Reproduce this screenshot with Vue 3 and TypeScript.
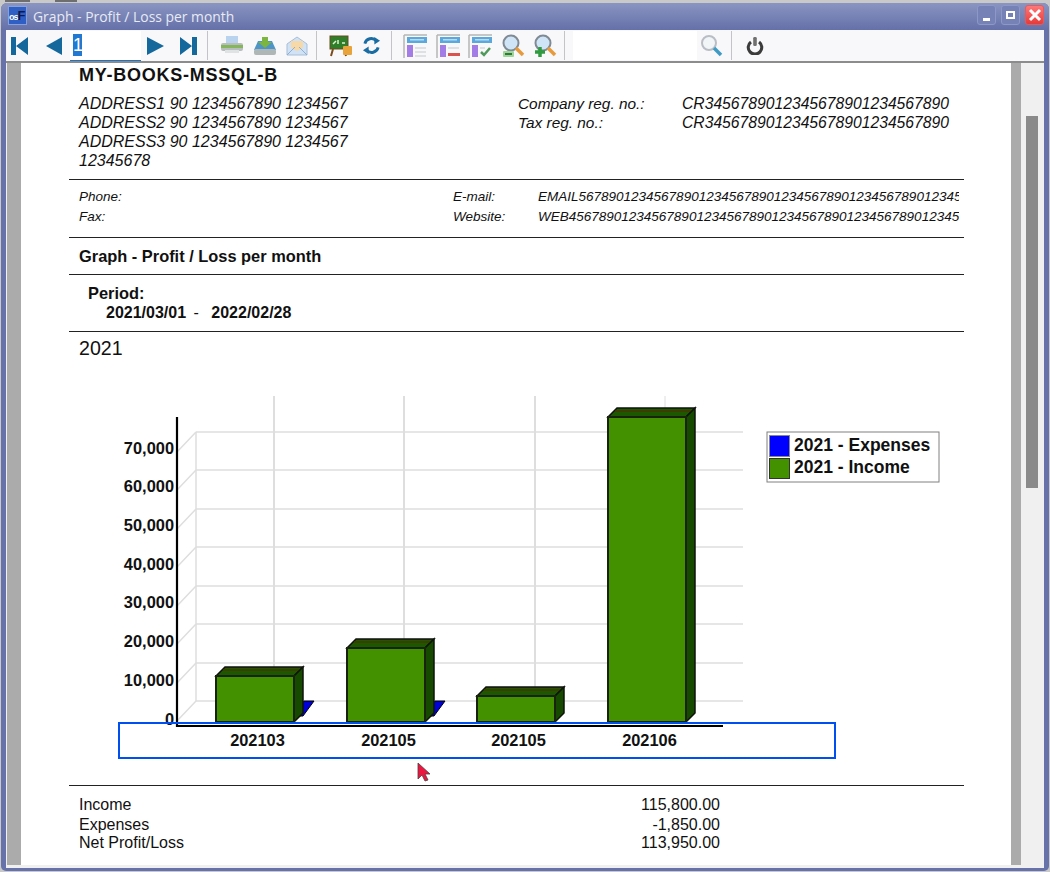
<script setup lang="ts">
const companyLines = [
  'ADDRESS1 90 1234567890 1234567',
  'ADDRESS2 90 1234567890 1234567',
  'ADDRESS3 90 1234567890 1234567',
  '12345678',
];

// grid lines sit slightly tighter than the labels next to them
const ticks = [
  { label: '70,000', y: 432, labelY: 454 },
  { label: '60,000', y: 470, labelY: 492 },
  { label: '50,000', y: 509, labelY: 531 },
  { label: '40,000', y: 547, labelY: 570 },
  { label: '30,000', y: 586, labelY: 608 },
  { label: '20,000', y: 624, labelY: 647 },
  { label: '10,000', y: 663, labelY: 686 },
  { label: '0', y: 701, labelY: 725 },
];

const bars = [
  { label: '202103', x: 216, top: 676, expense: true },
  { label: '202105', x: 347, top: 648, expense: true },
  { label: '202105', x: 477, top: 696, expense: false },
  { label: '202106', x: 608, top: 417, expense: false },
];

const BAR_W = 78;
const DEPTH = 9;
const BASE = 722;

const totals = [
  { name: 'Income', value: '115,800.00', cls: 'gap-a' },
  { name: 'Expenses', value: '-1,850.00', cls: '' },
  { name: 'Net Profit/Loss', value: '113,950.00', cls: '' },
];
</script>

<template>
  <div class="desktop">
    <div class="behind"><i class="mark-a" /><i class="mark-b" /></div>
    <div class="window">
      <header class="titlebar">
        <div class="app-icon"><span>os</span><b>F</b></div>
        <span class="title">Graph - Profit / Loss per month</span>
        <div class="win-buttons">
          <button class="win-btn"><i class="min-glyph" /></button>
          <button class="win-btn"><i class="max-glyph" /></button>
          <button class="win-btn close">
            <svg width="14" height="14" viewBox="0 0 14 14"><path d="M2 2 12 12M12 2 2 12" stroke="#fff" stroke-width="3" /></svg>
          </button>
        </div>
      </header>

      <div class="toolbar">
        <div class="tool nav-first">
          <svg width="17" height="18" viewBox="0 0 17 18"><path d="M0 0h5v18H0zM5 9 17 0v18z" fill="#15689c" /></svg>
        </div>
        <div class="tool nav-prev">
          <svg width="16" height="18" viewBox="0 0 16 18"><path d="M0 9 16 0v18z" fill="#15689c" /></svg>
        </div>
        <div class="page-input"><span class="page-sel">1</span></div>
        <div class="tool nav-next">
          <svg width="17" height="18" viewBox="0 0 17 18"><path d="M17 9 0 0v18z" fill="#15689c" /></svg>
        </div>
        <div class="tool nav-last">
          <svg width="17" height="18" viewBox="0 0 17 18"><path d="M12 0h5v18h-5zM12 9 0 0v18z" fill="#15689c" /></svg>
        </div>
        <i class="sep s1" />
        <div class="tool">
          <svg width="24" height="22" viewBox="0 0 24 22">
            <path d="M6 1h12v7H6z" fill="#b9d3ee" />
            <rect x="1" y="8" width="22" height="8" rx="2" fill="#b8bdbd" />
            <rect x="1" y="10" width="22" height="3" fill="#86b65c" />
            <path d="M5 15h14v3H5z" fill="#dfe3e3" />
          </svg>
        </div>
        <div class="tool">
          <svg width="24" height="22" viewBox="0 0 24 22">
            <path d="M5 6h14l4 9H1z" fill="#4d95c6" />
            <path d="M9 2h6v5h4l-7 6-7-6h4z" fill="#7cb540" />
            <rect x="1" y="14" width="22" height="6" rx="2" fill="#aeb6b6" />
          </svg>
        </div>
        <div class="tool">
          <svg width="22" height="22" viewBox="0 0 22 22">
            <path d="M1 9 11 2l10 7v11H1z" fill="#cfe2f6" stroke="#a9bed6" />
            <path d="M5 6h12v7l-6 3-6-3z" fill="#f7d9a8" />
            <path d="M1 20 9 12M21 20l-8-8" stroke="#8fb0d2" />
          </svg>
        </div>
        <i class="sep s2" />
        <div class="tool">
          <svg width="24" height="22" viewBox="0 0 24 22">
            <rect x="1" y="1" width="18" height="13" fill="#2f7f2a" stroke="#6e4a1c" />
            <path d="M4 9l3-3M9 9V5M13 8h3" stroke="#dff0d0" stroke-width="1.5" />
            <path d="M4 14 2 21M15 14l2 7" stroke="#7a4d1a" stroke-width="2" />
            <rect x="14" y="11" width="9" height="9" rx="1" fill="#e8a33a" />
          </svg>
        </div>
        <div class="tool refresh">
          <svg width="19" height="19" viewBox="0 0 20 20" fill="none">
            <path d="M3 8a7 7 0 0 1 12-3" stroke="#1a6da3" stroke-width="3" />
            <path d="M17 12a7 7 0 0 1-12 3" stroke="#1a6da3" stroke-width="3" />
            <path d="M13 1l6 4-6 4zM7 11 1 15l6 4z" fill="#1a6da3" />
          </svg>
        </div>
        <i class="sep s3" />
        <div v-for="kind in ['plain', 'minus', 'check']" :key="kind" class="tool">
          <svg width="24" height="24" viewBox="0 0 24 24">
            <path d="M1 1h23M1 1v23" stroke="#b5b5b5" stroke-width="1.5" />
            <rect x="4" y="3" width="20" height="6" fill="#5aa8dc" />
            <rect x="7" y="5" width="14" height="1.5" fill="#b6dbf2" />
            <rect x="4" y="11" width="6" height="12" fill="#a47ce6" />
            <template v-if="kind === 'plain'">
              <path d="M12 14h11M12 18h11M12 22h11" stroke="#dde1e4" stroke-width="2" />
            </template>
            <template v-else-if="kind === 'minus'">
              <path d="M12 14h11" stroke="#dde1e4" stroke-width="2" />
              <rect x="12" y="19" width="12" height="3" fill="#d9534f" />
            </template>
            <template v-else>
              <path d="M12 14h5" stroke="#dde1e4" stroke-width="2" />
              <path d="M13 18l3 3 6-7" stroke="#4f9a5a" stroke-width="2.5" fill="none" />
            </template>
          </svg>
        </div>
        <div v-for="kind in ['out', 'in']" :key="kind" class="tool">
          <svg width="24" height="24" viewBox="0 0 24 24">
            <circle cx="10" cy="9" r="7.5" fill="#cfe5f7" stroke="#7f8a94" stroke-width="2" />
            <path d="M15 14l7 7" stroke="#e79a3c" stroke-width="3.5" />
            <rect v-if="kind === 'out'" x="2" y="17" width="11" height="6" rx="1" fill="#9ed39a" />
            <rect v-if="kind === 'out'" x="4" y="19" width="7" height="2" fill="#2f7a38" />
            <path v-if="kind === 'in'" d="M7 13v10M2 18h10" stroke="#2f9a3f" stroke-width="3.5" />
          </svg>
        </div>
        <i class="sep s4" />
        <div class="search-box" />
        <div class="tool search-tool">
          <svg width="24" height="24" viewBox="0 0 24 24">
            <circle cx="9" cy="9" r="7" fill="#f2f5f8" stroke="#b9bec4" stroke-width="2" />
            <path d="M14 14l7 7" stroke="#3f9bc4" stroke-width="3.5" />
          </svg>
        </div>
        <i class="sep s5" />
        <div class="tool">
          <svg width="18" height="18" viewBox="0 0 20 20" fill="none">
            <path d="M5.5 5.5a7.5 7.5 0 1 0 9 0" stroke="#3b3b3b" stroke-width="3.4" />
            <rect x="8" y="0" width="4" height="10" rx="1.5" fill="#707070" />
          </svg>
        </div>
      </div>

      <div class="viewer">
        <div class="gutter" />
        <main class="page">
          <h1 class="company">MY-BOOKS-MSSQL-B</h1>
          <section class="company-info">
            <div class="address">
              <div v-for="line in companyLines" :key="line">{{ line }}</div>
            </div>
            <div class="reg-labels">
              <div>Company reg. no.:</div>
              <div>Tax reg. no.:</div>
            </div>
            <div class="reg-values">
              <div>CR3456789012345678901234567890</div>
              <div>CR3456789012345678901234567890</div>
            </div>
          </section>

          <section class="contact">
            <div class="contact-left">
              <div>Phone:</div>
              <div>Fax:</div>
            </div>
            <div class="contact-labels">
              <div>E-mail:</div>
              <div>Website:</div>
            </div>
            <div class="contact-values">
              <div>EMAIL567890123456789012345678901234567890123456789012345</div>
              <div>WEB4567890123456789012345678901234567890123456789012345</div>
            </div>
          </section>

          <section class="report-title">Graph - Profit / Loss per month</section>

          <section class="period">
            <div class="period-label">Period:</div>
            <div class="period-range"><b>2021/03/01</b><span> - </span><b>2022/02/28</b></div>
          </section>

          <h2 class="year">2021</h2>

          <div class="chart-wrap">
            <svg class="chart" width="895" height="423" viewBox="69 362 895 423">
              <!-- back wall and floor -->
              <g stroke="#dedede" stroke-width="1.5" fill="none">
                <template v-for="t in ticks" :key="t.y">
                  <path :d="`M196 ${t.y}H743M196 ${t.y}L177 ${t.y + 20}`" />
                </template>
                <path d="M196 432V701" />
                <path d="M274 396V701M404 396V701M535 396V701" stroke-width="2" />
                <path d="M665 396V408" stroke-width="1" />
              </g>

              <!-- axes -->
              <path d="M177 417V726H723" fill="none" stroke="#000" stroke-width="2.2" />
              <text
                v-for="t in ticks"
                :key="t.label"
                class="tick"
                x="174"
                :y="t.labelY"
                text-anchor="end"
              >{{ t.label }}</text>

              <!-- bars -->
              <g v-for="b in bars" :key="b.x">
                <path
                  v-if="b.expense"
                  :d="`M${b.x + BAR_W} 716 h9 l11 -15 h-10 z`"
                  fill="#0000d8"
                  stroke="#000"
                />
                <path
                  :d="`M${b.x} ${b.top} l${DEPTH} ${-DEPTH} h${BAR_W} l${-DEPTH} ${DEPTH} z`"
                  fill="#1c5800"
                  stroke="#111"
                  stroke-width="1.5"
                />
                <path
                  :d="`M${b.x + 7} ${b.top - 6} h${BAR_W}`"
                  stroke="#4a3400"
                  stroke-width="1.5"
                />
                <path
                  :d="`M${b.x + BAR_W} ${b.top} l${DEPTH} ${-DEPTH} V${BASE - DEPTH} l${-DEPTH} ${DEPTH} z`"
                  fill="#164a00"
                  stroke="#0d140a"
                  stroke-width="1.5"
                />
                <rect
                  :x="b.x"
                  :y="b.top"
                  :width="BAR_W"
                  :height="BASE - b.top"
                  fill="#449100"
                  stroke="#18220f"
                  stroke-width="2"
                />
                <text class="x-label" :x="b.x + 41.5" y="746" text-anchor="middle">{{ b.label }}</text>
              </g>

              <!-- legend -->
              <rect x="767" y="432" width="172" height="50" fill="#fff" stroke="#808080" />
              <rect x="769.5" y="435.5" width="20" height="21" fill="#0000ff" stroke="#888" />
              <rect x="769.5" y="458.5" width="20" height="20" fill="#449100" stroke="#333" />
              <text class="legend" x="794" y="451">2021 - Expenses</text>
              <text class="legend" x="794" y="473">2021 - Income</text>
            </svg>
            <div class="selection" />
            <svg class="cursor" width="14" height="20" viewBox="0 0 14 20">
              <path d="M1 1v16l4-4 3 6 3-1-3-6h5z" fill="#ee1540" stroke="#444" stroke-width="0.8" />
            </svg>
          </div>

          <section class="totals">
            <div v-for="row in totals" :key="row.name" class="total-row" :class="row.cls">
              <span>{{ row.name }}</span>
              <span>{{ row.value }}</span>
            </div>
          </section>
        </main>
        <div class="gutter thin" />
        <div class="scrollbar"><div class="thumb" /></div>
      </div>
    </div>
  </div>
</template>

<style>
html,
body {
  margin: 0;
  background: #c9c9c9;
  overflow: hidden;
}
</style>

<style scoped>
.desktop {
  width: 1050px;
  height: 872px;
  box-sizing: border-box;
  font-family: "Liberation Sans", Arial, sans-serif;
  color: #111;
}
.behind {
  height: 3px;
  overflow: hidden;
  display: flex;
}
.behind i {
  height: 2px;
  background: #6e6e6e;
  flex: none;
}
.mark-a {
  width: 25px;
  margin-left: 5px;
}
.mark-b {
  width: 22px;
  margin-left: 25px;
}
.window {
  height: 868px;
  margin-left: 1px;
  width: 1048px;
  box-sizing: border-box;
  border-radius: 6px 6px 5px 5px;
  background: #6672a9;
  padding: 0 5px 3px;
  display: flex;
  flex-direction: column;
}
.titlebar {
  height: 27px;
  margin: 0 -5px;
  padding: 0 5px 0 7px;
  display: flex;
  align-items: center;
  flex: none;
  border-radius: 6px 6px 0 0;
  background: linear-gradient(#8a95c2, #6470a8);
}
.app-icon {
  width: 19px;
  height: 19px;
  margin-top: -2px;
  background: #2f5fc4;
  border: 1px solid #86a0dc;
  box-sizing: border-box;
  color: #fff;
  font-size: 9px;
  line-height: 17px;
  white-space: nowrap;
  overflow: hidden;
  letter-spacing: -1px;
  font-weight: bold;
}
.app-icon b {
  color: #10184c;
  font-size: 13px;
}
.title {
  margin-left: 6px;
  color: #e8eaf4;
  font-family: "Open Sans", sans-serif;
  font-size: 13.9px;
}
.win-buttons {
  margin-left: auto;
  margin-top: -3px;
  display: flex;
  gap: 5px;
}
.win-btn {
  width: 19px;
  height: 20px;
  padding: 0;
  border: 1px solid #8d98c6;
  border-radius: 3px;
  background: #7682b6;
  display: flex;
  align-items: center;
  justify-content: center;
}
.win-btn.close {
  background: linear-gradient(#f77, #e53a3a);
  border-color: #e65a5a;
}
.min-glyph {
  width: 7px;
  height: 3px;
  background: #fff;
  margin-top: 9px;
}
.max-glyph {
  width: 9px;
  height: 8px;
  border: 2px solid #fff;
  box-sizing: border-box;
}
.toolbar {
  height: 33px;
  flex: none;
  display: flex;
  align-items: center;
  background: #f8f8fb;
  border-bottom: 2px solid #8c8c8c;
  box-sizing: border-box;
}
.tool {
  width: 32.5px;
  height: 28px;
  flex: none;
  display: flex;
  align-items: center;
  justify-content: center;
}
.nav-first {
  width: 26px;
}
.nav-prev {
  width: 38px;
  padding-left: 6px;
  box-sizing: border-box;
}
.nav-next {
  width: 29px;
}
.nav-last {
  width: 36px;
}
.refresh {
  width: 28px;
}
.page-input {
  width: 71px;
  height: 30px;
  flex: none;
  background: #fff;
  border-bottom: 1px solid #1a74c8;
  box-sizing: border-box;
  padding: 3px 0 0 3px;
  font-size: 18px;
  line-height: 22px;
}
.page-sel {
  display: block;
  background: #2279d2;
  color: #fff;
  width: 9px;
  height: 22px;
}
.sep {
  width: 1px;
  height: 29px;
  flex: none;
  background: #c4c4c8;
}
.s1 {
  margin: 0 8px 0 1px;
}
.s2 {
  margin: 0 8px 0 2px;
}
.s3 {
  margin: 0 7px 0 6px;
}
.s4 {
  margin: 0 8px 0 2px;
}
.s5 {
  margin: 0 7px 0 3px;
}
.search-box {
  width: 124px;
  height: 29px;
  background: #fff;
  flex: none;
}
.search-tool {
  width: 31px;
}
.viewer {
  flex: 1;
  min-height: 0;
  display: flex;
  overflow: hidden;
  background: #f0f0f0;
  padding-bottom: 3px;
}
.gutter {
  width: 14px;
  margin-left: 1px;
  background: #ababab;
  flex: none;
}
.gutter.thin {
  width: 10px;
  margin-left: 0;
}
.page {
  width: 990px;
  flex: none;
  background: #fff;
  box-sizing: border-box;
  padding: 0 47px 0 48px;
  overflow: hidden;
}
.scrollbar {
  flex: 1;
  padding: 53px 0 0 5px;
}
.thumb {
  width: 12px;
  height: 372px;
  background: #8a8a8a;
}
.company {
  margin: 0 0 0 10px;
  font-size: 18px;
  letter-spacing: 0.75px;
  line-height: 25px;
  height: 25px;
  font-weight: bold;
}
.company-info {
  height: 92px;
  box-sizing: border-box;
  padding: 6px 0 0 10px;
  display: flex;
  font-style: italic;
  font-size: 15.7px;
  line-height: 19px;
  border-bottom: 1px solid #222;
  white-space: nowrap;
}
.address {
  width: 439px;
  font-size: 16px;
}
.reg-labels {
  width: 164px;
  font-size: 15.4px;
}
.contact {
  height: 58px;
  padding: 7px 0 0 10px;
  box-sizing: border-box;
  display: flex;
  font-style: italic;
  font-size: 13.5px;
  line-height: 19.5px;
  border-bottom: 1px solid #222;
  white-space: nowrap;
  overflow: hidden;
}
.contact-left {
  width: 374px;
}
.contact-labels {
  width: 85px;
}
.contact-values {
  width: 421px;
  overflow: hidden;
}
.report-title {
  height: 37px;
  padding-left: 10px;
  font-size: 16.4px;
  font-weight: bold;
  line-height: 36px;
  border-bottom: 1px solid #222;
  box-sizing: border-box;
}
.period {
  height: 57px;
  padding: 9px 0 0 19px;
  box-sizing: border-box;
  font-size: 16.4px;
  font-weight: bold;
  line-height: 19px;
  border-bottom: 1px solid #222;
}
.period-range {
  padding-left: 18px;
  font-size: 16px;
}
.period-range span {
  font-weight: normal;
  white-space: pre;
  margin: 0 8px 0 3px;
}
.year {
  margin: 0 0 0 10px;
  font-size: 19.6px;
  font-weight: normal;
  line-height: 32px;
  height: 30px;
}
.chart-wrap {
  position: relative;
  height: 423px;
  border-bottom: 1px solid #222;
}
.chart {
  display: block;
}
.tick,
.x-label {
  font-family: "Liberation Sans", Arial, sans-serif;
  font-size: 16.4px;
  font-weight: bold;
  fill: #111;
}
.legend {
  font-family: "Liberation Sans", Arial, sans-serif;
  font-size: 17.5px;
  font-weight: bold;
  fill: #111;
}
.selection {
  position: absolute;
  left: 49px;
  top: 360px;
  width: 718px;
  height: 37px;
  border: 2px solid #0050f0;
  box-sizing: border-box;
}
.cursor {
  position: absolute;
  left: 348px;
  top: 400px;
}
.totals {
  padding: 10px 0 0 10px;
  width: 641px;
  font-size: 16px;
}
.total-row {
  display: flex;
  justify-content: space-between;
  line-height: 18px;
}
.gap-a {
  margin-bottom: 2px;
}
</style>
